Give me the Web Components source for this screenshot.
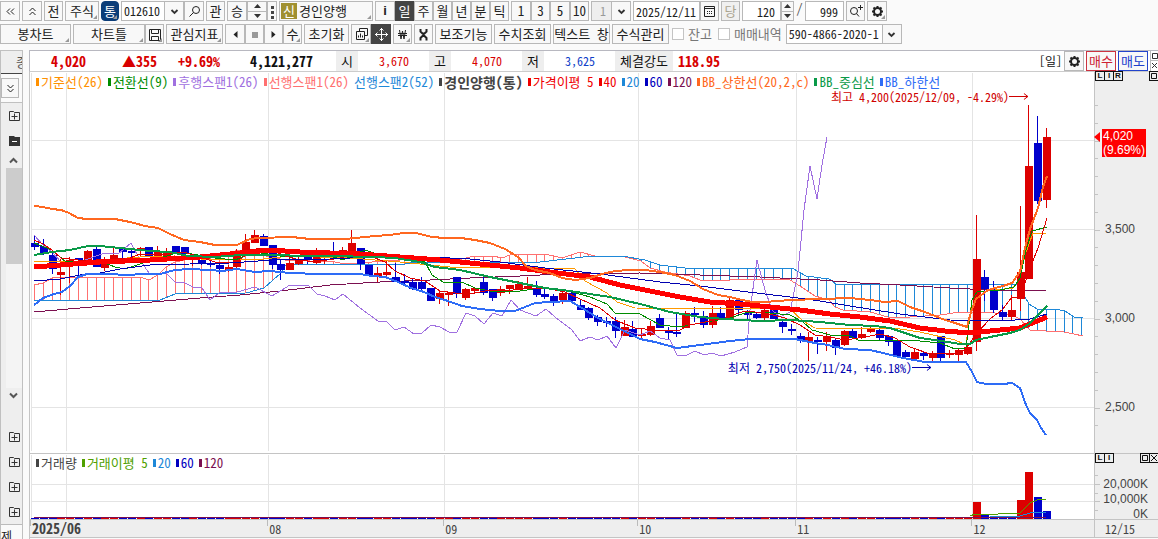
<!DOCTYPE html>
<html lang="ko">
<head>
<meta charset="utf-8">
<meta name="viewport" content="width=device-width, initial-scale=1">
<title>경인양행 012610</title>
<style>
  html, body { height: 100%; }
  body {
    margin: 0;
    background: #fafafa;
    color: #111;
    font: 13px/16px "Noto Sans CJK KR", "Liberation Sans", sans-serif;
    font-feature-settings: "hwid";
    overflow: hidden;
  }
</style>
</head>
<body>
<stock-app></stock-app>

<script>
// ---- icons ----
const ICONS = {
  left2: '<path d="M7 4.500 4 7.500 7 10.500M11 4.500 8 7.500 11 10.500"/>',
  up2: '<path d="M4.500 7 7.500 4 10.500 7M4.500 11 7.500 8 10.500 11"/>',
  down2: '<path d="M4.500 4 7.500 7 10.500 4M4.500 8 7.500 11 10.500 8"/>',
  chev: '<path d="M4.500 6 7.500 9 10.500 6" stroke-width="1.800"/>',
  up: '<path d="M4 9.500 7.500 6 11 9.500" stroke-width="2"/>',
  down: '<path d="M4 5.500 7.500 9 11 5.500" stroke-width="2"/>',
  search: '<circle cx="9" cy="6" r="3.500"/><path d="M6.500 8.500 2.500 12.500"/>',
  searchplus: '<circle cx="6" cy="7" r="3.500"/><path d="M8.500 9.500 11 12.500M12.500 1v5M10 3.500h5"/>',
  dots: '<path d="M6 2h3v3H6zM6 7h3v3H6zM6 12h3v3H6z" fill="#444" stroke="none"/>',
  save: '<path d="M2.500 2.500h11v11h-11zM4.500 2.500v4h7v-4M4.500 13.500v-4h7v4"/>',
  prev: '<path d="M9.500 4v7L5.500 7.500z" fill="#222" stroke="none"/>',
  stop: '<path d="M5 5h6v6H5z" fill="#999" stroke="none"/>',
  next: '<path d="M5.500 4v7L9.500 7.500z" fill="#222" stroke="none"/>',
  windows: '<path d="M5.500 4.500v-3h8v7h-3M2.500 4.500h8v8h-8zM4.500 10.500v-2M6.500 10.500v-4M8.500 10.500v-2"/>',
  move: '<path d="M7.500 1v13M1 7.500h13M5.500 3.500l2-2 2 2M5.500 11.500l2 2 2-2M3.500 5.500l-2 2 2 2M11.500 5.500l2 2-2 2"/>',
  won: '<path d="M4.500 3 6 12 7.500 4 9 12 10.500 3M3 6.500h9M3 8.500h9"/>',
  tool: '<path d="M4.500 2v2.500l2 2h2l2-2V2M4.500 13.500V11l2-2h2l2 2v2.500M7.500 6v4" stroke-width="2"/>',
  cal: '<path d="M2.500 2.500h10v10h-10zM2.500 4.500h10" /><path d="M5 7.500h6M5 9.500h6" stroke-dasharray="1 1"/>',
  gear: '<circle cx="7.500" cy="7.500" r="3.500" stroke-width="2"/><path d="M7.500 2v2M7.500 11v2M2 7.500h2M11 7.500h2M3.500 3.500l1.500 1.500M10 10l1.500 1.500M11.500 3.500l-1.500 1.500M5 10l-1.500 1.500" stroke-width="2"/>',
  plusbox: '<path d="M2.500 3.500h4l1 1h5v8h-10zM4.500 8.500h6M7.500 5.500v6"/>',
  minusbox: '<path d="M2 3h5l1 1h5v9H2z" fill="#333" stroke="none"/><path d="M5 8.500h5" stroke="#fff"/>',
};
const icon = (name, size = 15) =>
  `<svg width="${size}" height="${size}" viewBox="0 0 15 15" fill="none" stroke="currentColor" aria-hidden="true">${ICONS[name]}</svg>`;

// small helper, every element below only differs by its markup
function define(name, render) {
  customElements.define(name, class extends HTMLElement {
    constructor() {
      super();
      this.attachShadow({ mode: "open" });
    }
    connectedCallback() {
      this.shadowRoot.innerHTML = render(this);
    }
  });
}

// toolbar button. attributes: icon, corner, variant
define("tool-button", (el) => `
  <style>
    :host { display: block; flex: none; height: 20px; width: 20px; }
    button {
      box-sizing: border-box; position: relative;
      display: flex; align-items: center; justify-content: center;
      width: 100%; height: 100%; padding: 0; margin: 0;
      border: 1px solid #b8b8b8; background: #f8f8f8;
      font: inherit; font-feature-settings: inherit; color: #222; white-space: nowrap;
    }
    svg { flex: none; }
    :host([corner]) button::after {
      content: ""; position: absolute; right: 1px; bottom: 1px;
      border: 2px solid; border-color: transparent #999 #999 transparent;
    }
    :host([variant=dark]) button { background: #444; border-color: #444; color: #fff; }
    :host([variant=blue]) button { background: #0b3d78; border-color: #0b3d78; color: #fff; border-radius: 4px; }
    :host([variant=off]) button { background: #f0f0f0; color: #aaa490; }
    :host([variant=buy]) button { border-color: #cc3340; color: #cc2233; }
    :host([variant=sell]) button { border-color: #2244cc; color: #2040cc; }
    :host([variant=name]) button { justify-content: flex-start; padding-left: 1px; gap: 2px; }
  </style>
  <button type="button" aria-label="${el.getAttribute("label") || el.textContent.trim()}">${el.hasAttribute("icon") ? icon(el.getAttribute("icon")) : ""}<slot></slot></button>`);

define("tool-field", (el) => `
  <style>
    :host { display: block; flex: none; height: 20px; }
    input {
      box-sizing: border-box; width: 100%; height: 100%; padding: 0 2px; margin: 0;
      border: 1px solid #b8b8b8; background: #fff; color: #222;
      font: inherit; font-size: 12px; font-feature-settings: inherit;
      text-align: ${el.getAttribute("align") || "left"};
    }
    :host([align=right]) input { padding-right: 5px; }
  </style>
  <input type="text" aria-label="${el.getAttribute("label")}" value="${el.getAttribute("value")}">`);

define("tool-select", (el) => `
  <style>
    :host { display: grid; grid-template-columns: 1fr 20px; flex: none; height: 20px; }
    select {
      grid-area: 1 / 1 / 2 / 3; appearance: none; box-sizing: border-box;
      width: 100%; height: 20px; margin: 0; padding: 0 20px 0 2px; border: 1px solid #b8b8b8; border-radius: 0;
      background: #fff; color: #222; font: inherit; font-size: 12px; font-feature-settings: inherit;
    }
    :host([off]) select { background: #eee; color: #999; text-align: right; padding-right: 24px; }
    span {
      grid-area: 1 / 2; z-index: 1; pointer-events: none; margin: 1px 1px 1px 0;
      display: flex; align-items: center; justify-content: center;
      background: #f8f8f8; border-left: 1px solid #b8b8b8; color: #333;
    }
  </style>
  <select aria-label="${el.getAttribute("label")}"><option>${el.getAttribute("value")}</option></select>
  <span>${icon("chev")}</span>`);

define("tool-spin", (el) => `
  <style>
    :host { display: flex; flex-direction: column; flex: none; width: 13px; height: 20px; }
    button {
      box-sizing: border-box; flex: 1; min-height: 0; padding: 0; margin: 0;
      display: flex; align-items: center; justify-content: center;
      border: 1px solid #b8b8b8; background: #f8f8f8;
    }
    button + button { border-top: 0; }
    svg { display: block; }
  </style>
  <button type="button" aria-label="${el.getAttribute("label")} 증가"><svg width="7" height="4"><path d="M0 4 3.500 0 7 4z" fill="#333"/></svg></button>
  <button type="button" aria-label="${el.getAttribute("label")} 감소"><svg width="7" height="4"><path d="M0 0 3.500 4 7 0z" fill="#333"/></svg></button>`);

define("tool-check", () => `
  <style>
    :host { display: block; flex: none; }
    label { display: flex; align-items: center; gap: 4px; color: #777; }
    input { appearance: none; box-sizing: border-box; width: 12px; height: 12px; margin: 0; border: 1px solid #c4c4c4; background: #fff; }
    input:checked { background: #444; }
  </style>
  <label><input type="checkbox"><slot></slot></label>`);

define("tool-bar", () => `
  <style>
    :host { display: flex; align-items: center; height: 20px; gap: 2px; }
    ::slotted(div) { display: flex; flex: none; }
  </style>
  <slot></slot>`);

define("quote-bar", () => `
  <style>
    :host {
      display: flex; align-items: center; flex: none; box-sizing: border-box; height: 22px;
      background: #fff; border: 1px solid #b8b8c0; border-right: 0; border-bottom-color: #ccc;
      font-size: 12px; line-height: 20px;
    }
    span { flex: none; text-align: right; white-space: nowrap; }
    b { flex: none; text-align: right; font-size: 14px; }
    i { flex: none; font-style: normal; font-size: 13px; text-align: center; background: #eee; width: 22px; height: 20px; }
    .r { color: #d80000; } .b { color: #1040c8; }
    .end { margin-left: auto; padding-right: 2px; }
    .actions { display: flex; gap: 2px; font-size: 13px; line-height: 16px; }
    .mini { width: 8px; flex: none; }
  </style>
  <b class="r" style="width:56px">4,020</b>
  <b class="r" style="width:71px">▲355</b>
  <b class="r" style="width:63px">+9.69%</b>
  <b style="width:93px">4,121,277</b>
  <i style="margin-left:23px">시</i><span class="r" style="width:51px">3,670</span>
  <i style="margin-left:20px">고</i><span class="r" style="width:51px">4,070</span>
  <i style="margin-left:20px">저</i><span class="b" style="width:51px">3,625</span>
  <i style="margin-left:20px;width:58px">체결강도</i><b class="r" style="width:47px">118.95</b>
  <span class="end">[일]</span>
  <div class="actions">
    <tool-button icon="gear" label="설정"></tool-button>
    <tool-button variant="buy" style="width:30px">매수</tool-button>
    <tool-button variant="sell" style="width:30px">매도</tool-button>
    <svg class="mini" width="8" height="20" fill="none" stroke="#333"><path d="M0.500 0v20M0 9.500h8" stroke="#bbb"/><path d="M2.500 2.500h5v5h-5zM2 12l5 5M7 12l-5 5"/></svg>
  </div>`);

define("side-rail", () => `
  <style>
    :host {
      display: flex; flex-direction: column; flex: none; box-sizing: border-box; width: 23px;
      border: solid #c0c0c0; border-width: 1px 1px 0 1px; background: #eee;
    }
    .tab { height: 22px; line-height: 22px; border-bottom: 1px solid #444; overflow: hidden; padding-left: 15px; white-space: nowrap; color: #555; }
    .open { padding: 4px 0; background: #fafafa; border-bottom: 1px solid #c0c0c0; display: flex; }
    .open tool-button { width: 18px; }
    .row { height: 25px; display: flex; align-items: center; justify-content: flex-end; color: #333; }
    .scroll { flex: 1; display: flex; flex-direction: column; margin-left: 5px; color: #555; min-height: 0; }
    .scroll svg { flex: none; }
    .thumb { flex: 96; background: #ccc; }
    .rest { flex: 124; background: #f4f4f4; }
    .foot { height: 14px; border-top: 1px solid #bbb; background: #fafafa; overflow: hidden; line-height: 22px; font-size: 12px; color: #222; white-space: nowrap; }
    .gap { height: 21px; }
  </style>
  <div class="tab">종</div>
  <div class="open"><tool-button icon="down2" label="펼치기"></tool-button></div>
  <div class="row">${icon("plusbox")}</div>
  <div class="row">${icon("minusbox")}</div>
  <div class="scroll">${icon("up")}<div class="thumb"></div><div class="rest"></div>${icon("down")}</div>
  <div class="gap"></div>
  <div class="row">${icon("plusbox")}</div>
  <div class="row">${icon("plusbox")}</div>
  <div class="row">${icon("plusbox")}</div>
  <div class="row">${icon("plusbox")}</div>
  <div class="foot">제</div>`);

define("legend-item", () => `
  <style>
    :host { display: flex; align-items: center; gap: 2px; white-space: nowrap; }
    :host(:not([plain]))::before { content: ""; width: 3px; height: 8px; background: currentColor; }
    :host([strong]) { font-weight: bold; font-size: 14px; }
  </style>
  <slot></slot>`);

// window buttons in the corner of an axis column
define("pane-keys", (el) => {
  const key = (k) => {
    if (k === "□") return '<button type="button" aria-label="최대화"><svg width="8" height="8"><path d="M1.500 1.500h5v5h-5z" fill="none" stroke="#111"/></svg></button>';
    if (k === "×") return '<button type="button" aria-label="닫기"><svg width="8" height="8"><path d="M1 1l6 6M7 1 1 7" stroke="#111"/></svg></button>';
    return `<button type="button">${k}</button>`;
  };
  return `
  <style>
    :host { display: flex; justify-content: space-between; height: 10px; }
    div { display: flex; }
    button {
      box-sizing: border-box; width: 10px; height: 10px; margin: 0 -1px 0 0; padding: 0;
      display: flex; align-items: center; justify-content: center;
      border: 1px solid #111; background: #eee; color: #111; font: bold 8px/8px "Liberation Sans", sans-serif;
    }
    svg { display: block; flex: none; }
  </style>
  <div>${[...el.getAttribute("keys")].map(key).join("")}</div>
  <div>${[...el.getAttribute("end")].map(key).join("")}</div>`;
});

// ---- chart data ----
const X0 = 34.4, STEP = 8.8;
const px = (i) => X0 + STEP * i;

// side, high, body top, body bottom, low
const CANDLES = `b236,243,247,250 b239,246,254,255 b250,255,269,274 r259,272,275,295 r257,260,261,283 b258,258,260,275
r250,251,260,262 b247,249,267,267 r257,263,268,271 r248,255,260,260 b248,249,252,260 b250,251,252,258
r247,248,249,256 b247,247,257,257 r246,251,257,257 r248,252,258,258 b246,246,253,253 b247,247,254,254
r255,257,258,266 b258,260,263,265 b259,263,264,267 b263,265,269,274 r265,267,270,272 r249,253,267,268
r234,242,251,251 r230,235,243,243 b234,236,246,246 b245,245,265,269 b260,264,270,280 r258,263,270,270
r257,259,264,265 b255,256,260,264 r248,255,263,264 r250,255,257,264 b242,251,253,255 r247,250,253,256
r230,243,253,253 b248,248,264,270 b265,265,275,276 r267,273,277,282 r260,272,275,276 b263,277,282,282
b274,281,283,286 b279,282,289,290 b277,282,289,291 b288,288,301,301 r290,293,299,304 r292,293,294,306
b277,277,294,298 r288,289,298,300 r287,288,291,294 b277,282,293,295 b289,289,298,301 r286,289,293,296
r285,285,289,294 r281,284,290,290 r277,286,288,288 b281,288,295,297 b289,294,297,299 b294,296,301,306
r291,293,300,304 b292,293,301,302 b300,305,310,310 b307,308,318,320 b315,317,322,326 b317,321,322,327
b317,321,331,338 r320,327,336,336 b321,329,337,337 r328,334,336,339 r321,326,335,336 b314,318,328,328
b327,331,333,340 b314,332,333,337 r311,313,328,328 b307,313,314,322 b311,316,325,328 r306,313,325,328
b307,313,318,318 r297,300,318,318 b298,300,310,315 b310,313,315,320 b312,314,318,319 r308,310,318,320
b309,310,319,319 b320,322,327,333 b324,329,331,335 b333,336,341,343 r332,337,341,361 b337,340,342,354
r332,336,342,351 b338,340,348,355 r330,331,345,346 b328,331,338,338 r327,334,338,339 r326,329,332,333
b329,330,338,341 b335,336,342,346 b340,341,356,357 b350,352,357,359 r348,352,359,359 b352,353,356,360
r351,353,358,362 b336,336,358,361 r350,353,354,358 r349,350,355,361 r345,347,354,355 r215,259,342,351
b270,277,289,301 b281,289,310,313 b305,312,317,321 r295,310,317,321 r206,272,299,311 r105,166,279,279
b116,143,201,204 r128,137,200,208`.split(/\s+/).map((s) => [s[0], ...s.slice(1).split(",").map(Number)]);

const LINES = {
  lagging: ["#a070e0", 1, "34,235 43,245 52,252 61,262 80,262 96,256 105,253 118,254 131,243 140,260 149,273 166,273 175,282 185,283 193,287 202,288 210,300 219,293 237,292 255,287 272,296 290,285 308,285 317,294 325,296 335,300 343,294 360,308 378,321 387,322 395,330 404,327 414,334 422,333 431,325 440,327 449,332 457,332 466,313 475,316 484,324 493,313 502,316 511,300 520,310 536,316 546,309 555,317 572,330 580,341 590,337 598,340 607,336 616,348 625,330 640,335 650,331 660,338 670,340 677,355 685,356 695,351 704,355 712,353 721,356 735,352 747,347 750,310 757,260 765,290 772,310 780,317 790,312 798,272 804,210 810,166 817,199 822,165 827,137"],
  base: ["#ff9900", 1, "34,261 90,261 140,257 175,256 200,259 255,260 290,256 350,258 400,262 430,265 450,267 520,267 540,268 575,269 585,281 607,293 617,302 635,308 790,309 803,321 815,328 900,329 920,332 955,340 966,345 972,300 977,292 1013,288 1020,278 1025,255 1033,233 1046,233"],
  conv: ["#008c00", 1, "34,243 52,250 66,262 100,261 115,267 125,269 140,264 160,258 180,252 215,258 235,260 255,252 280,256 330,256 343,260 365,250 390,258 425,262 432,275 443,282 462,282 475,288 490,291 520,291 540,288 565,290 590,297 607,304 615,313 640,314 660,325 680,327 700,323 730,318 745,313 760,312 790,315 803,322 812,330 830,335 850,336 860,341 890,340 920,341 940,343 955,349 966,348 972,300 977,292 1000,290 1014,287 1020,278 1026,250 1032,231 1047,227"],
  ma5: ["#e00000", 1, "34,240 43,244 52,250 61,258 78,260 96,260 113,259 130,258 140,254 158,255 184,252 200,257 218,263 235,262 245,256 258,248 272,250 285,256 300,260 315,262 340,258 355,254 370,256 385,262 395,271 410,278 425,281 440,291 455,293 475,293 490,290 505,291 530,288 545,288 565,292 580,299 600,308 615,320 635,328 655,330 680,330 690,325 710,321 725,318 745,311 765,313 785,318 800,325 815,335 830,337 845,340 865,337 880,334 895,338 910,347 930,354 955,353 965,350 977,333 990,319 1003,309 1012,297 1020,298 1030,268 1038,248 1047,218"],
  ma60: ["#0000b0", 1, "34,281 60,279 80,275 100,273 120,269 150,265 190,264 230,263 272,260 330,259 370,257 430,257 470,259 500,262 545,268 600,274 660,282 700,286 740,291 790,297 820,301 850,306 900,314 950,320 1000,321 1030,319 1047,314"],
  ma120: ["#7b1050", 1, "34,312 80,308 140,303 200,298 240,295 280,291 330,285 380,282 430,280 470,278 520,276 560,274 640,273 700,275 760,277 820,280 860,283 900,285 950,288 970,289 1010,291 1047,290"],
  ma40: ["#ff0000", 5, "34,267 60,265 100,262 150,260 200,257 240,253 270,250 300,252 360,254 400,257 440,260 480,264 520,268 550,272 590,277 620,285 650,291 680,297 710,302 740,304 770,307 800,310 830,314 860,317 890,321 920,328 945,331 970,333 1000,330 1020,328 1035,322 1047,317"],
  bbMid: ["#0a9a48", 2, "34,255 52,252 70,250 88,246 100,246 120,248 150,251 170,252 188,256 215,257 240,255 280,255 300,256 330,256 375,257 395,258 420,262 435,267 460,270 490,277 520,283 545,288 570,291 610,297 640,304 670,312 700,317 725,319 760,321 790,320 820,322 850,325 875,326 890,328 905,333 920,338 935,340 960,344 970,344 976,340 990,337 1010,333 1020,330 1030,323 1038,315 1047,306"],
  bbUp: ["#ff6820", 2, "34,206 43,207 52,209 61,210 69,213 78,218 87,219 96,219 115,219 130,222 145,226 158,228 170,234 184,240 200,242 215,245 237,245 250,239 258,238 292,237 310,239 345,239 375,236 390,235 403,233 416,233 432,237 445,238 461,238 475,240 490,243 505,249 518,257 526,266 535,270 550,273 562,278 575,280 590,278 602,274 615,271 630,270 645,270 660,272 675,275 690,281 703,289 718,295 730,297 742,300 753,302 765,302 790,300 820,299 850,298 870,300 885,302 898,301 910,307 925,312 945,320 955,323 967,327 971,312 976,299 988,290 1003,286 1012,283 1020,272 1025,248 1030,229 1038,208 1043,187 1047,176"],
  bbLow: ["#2e6cf6", 2, "34,305 43,298 54,294 62,292 70,286 78,277 87,274 110,274 125,275 145,274 160,274 175,270 190,269 210,270 222,271 237,269 255,272 270,271 290,273 320,274 360,274 372,276 385,277 398,282 411,288 424,292 435,297 445,300 462,306 480,309 500,311 515,311 525,307 535,303 550,302 570,301 582,308 598,318 614,326 630,334 640,339 655,342 677,348 700,345 730,341 750,339 795,339 815,343 828,345 845,349 870,350 887,354 903,358 925,362 966,362 972,372 977,382 986,384 1003,384 1012,383 1020,388 1026,405 1030,413 1037,420 1041,428 1046,435"],
};
const SPAN_A = "34,285 43,283 52,278 61,277 96,277 140,277 149,280 158,275 166,267 175,262 190,259 220,254 240,250 262,255 275,258 285,260 335,262 345,264 400,260 430,258 440,260 450,258 458,260 470,257 493,256 502,258 510,255 545,254 562,258 580,252 595,256 625,257 641,261 650,268 665,272 690,276 700,280 730,280 765,279 790,280 800,286 815,296 829,300 835,307 843,310 870,312 888,317 910,317 940,315 960,312 985,312 1005,314 1012,315 1020,319 1030,330 1046,331 1064,332 1074,334 1083,336";
const SPAN_B = "34,300 160,300 175,294 246,293 264,288 273,280 281,273 285,266 290,264 405,264 415,262 540,262 592,256 622,256 645,260 660,265 685,268 792,268 806,276 829,279 836,284 850,284 1020,285 1024,295 1029,304 1037,309 1055,309 1065,311 1074,317 1083,318";
const MONTHS = [["2025/06", 31], ["", 66], ["08", 268], ["09", 444], ["10", 638], ["11", 796], ["12", 972]];

const COLOR = { r: "#dd0000", b: "#0000cc" };

// plot areas in drawing units
const PRICE = { x: 30, y: 72, w: 1064, h: 381 };
const VOLUME = { x: 30, y: 454, w: 1064, h: 65 };
const leftOf = (area, x) => `left:${((x - area.x) / area.w * 100).toFixed(2)}%`;
const topOf = (area, y) => `top:${((y - area.y) / area.h * 100).toFixed(2)}%`;

function valueAt(points, x) {
  const p = points.split(" ").map((s) => s.split(",").map(Number));
  for (let k = 1; k < p.length; k++) {
    if (x <= p[k][0]) {
      const t = (x - p[k - 1][0]) / (p[k][0] - p[k - 1][0]);
      return p[k - 1][1] + t * (p[k][1] - p[k - 1][1]);
    }
  }
  return p[p.length - 1][1];
}

const poly = (color, w, points) =>
  `<polyline points="${points}" stroke="${color}" stroke-width="${w}" fill="none"/>`;

const months = (top, bottom) =>
  MONTHS.map(([, x]) => `<path d="M${x} ${top}h1V${bottom}h-1z" fill="#e4e4e4"/>`).join("");

function cloud() {
  let out = "";
  for (let i = 0; i < 120; i++) {
    const x = Math.round(px(i) - 0.5);
    const a = Math.round(valueAt(SPAN_A, x)), b = Math.round(valueAt(SPAN_B, x));
    out += `<rect x="${x}" y="${Math.min(a, b)}" width="1" height="${Math.abs(a - b)}" fill="${a < b ? "#ff7070" : "#1e88d8"}"/>`;
  }
  return out + poly("#ff7070", 1, SPAN_A) + poly("#1e88d8", 1, SPAN_B);
}

function candles() {
  return CANDLES.map(([side, high, top, bottom, low], i) => {
    const x = Math.round(px(i) - 0.5);
    return `<path fill="${COLOR[side]}" d="M${x} ${high}h1V${low}h-1zM${x - 3} ${top}h8V${Math.max(bottom, top + 2)}h-8z"/>`;
  }).join("");
}

const arrow = '<svg width="20" height="7" fill="none" stroke="currentColor"><path d="M0 3.500h19M15 0.500l4 3-4 3"/></svg>';

const paneStyle = `
    :host { display: flex; min-height: 0; background: #fff; }
    .plot { position: relative; flex: 1; min-width: 0; }
    .plot > svg { position: absolute; inset: 0; width: 100%; height: 100%; display: block; }
    .legend { position: relative; display: flex; gap: 5px; padding: 2px 0 0 6px; height: 16px; }
    .axis {
      position: relative; flex: none; box-sizing: border-box; width: 64px;
      background: #eee; border-left: 1px solid #c4c4c4; color: #444;
      font: 12px/14px "Liberation Sans", sans-serif;
    }
    .axis > svg { position: absolute; left: 0; top: 0; height: 100%; width: 6px; }
    .axis > span { position: absolute; transform: translateY(-50%); white-space: nowrap; }
    pane-keys { position: relative; margin-top: -1px; }`;

define("price-chart", () => {
  const ticks = Array.from({ length: 19 }, (_, k) => Math.round(104.9 + 17.8 * k));
  return `
  <style>${paneStyle}
    .note { position: absolute; display: flex; align-items: center; font-size: 12px; white-space: nowrap; transform: translate(-100%, -50%); }
    .axis > span { left: 10px; }
    .axis > .last { left: 7px; width: 44px; box-sizing: border-box; padding-left: 1px; background: #f00; color: #fff; }
    .axis > .mark { left: -1px; width: 6px; height: 10px; transform: translateY(-50%); }
  </style>
  <div class="plot">
    <svg viewBox="30 72 1064 381" preserveAspectRatio="none" shape-rendering="crispEdges">
      ${months(73, 451)}
      ${[140, 229, 318, 407].map((y) => `<path d="M31 ${y}h1063v1H31z" fill="#e4e4e4"/>`).join("")}
      ${cloud()}
      ${poly(...LINES.ma120)}
      ${candles()}
      ${["lagging", "base", "conv", "ma5", "ma60", "ma40", "bbMid", "bbUp", "bbLow"].map((k) => poly(...LINES[k])).join("")}
    </svg>
    <div class="legend"><slot></slot></div>
    <div class="note" style="${leftOf(PRICE, 1029)};${topOf(PRICE, 97)};color:#d00000">최고 4,200(2025/12/09, -4.29%)${arrow}</div>
    <div class="note" style="${leftOf(PRICE, 932)};${topOf(PRICE, 368)};color:#0000b0">최저 2,750(2025/11/24, +46.18%)${arrow}</div>
  </div>
  <div class="axis">
    <svg viewBox="0 72 6 381" preserveAspectRatio="none" shape-rendering="crispEdges">${ticks.map((y, k) => `<rect x="0" y="${y}" width="${k % 5 === 2 ? 5 : 3}" height="1" fill="#c4c4c4"/>`).join("")}</svg>
    <pane-keys keys="LIR" end="□"></pane-keys>
    <svg class="mark" viewBox="0 0 6 10" style="${topOf(PRICE, 137)}"><path d="M6 0v10L0 5z" fill="#f00"/></svg>
    <span class="last" style="${topOf(PRICE, 143)}">4,020<br>(9.69%)</span>
    <span style="${topOf(PRICE, 229)}">3,500</span>
    <span style="${topOf(PRICE, 318)}">3,000</span>
    <span style="${topOf(PRICE, 407)}">2,500</span>
  </div>`;
});

define("volume-chart", () => {
  const tops = { 107: 502, 108: 515, 109: 517, 110: 517, 111: 517, 112: 500, 113: 472, 114: 497, 115: 511 };
  const side = (i) => (i === 115 || i === 111 ? "b" : CANDLES[i][0]);
  const bars = CANDLES.map((_, i) =>
    `<path fill="${COLOR[side(i)]}" d="M${Math.round(px(i) - 3.5)} ${tops[i] || 518}h8V519h-8z"/>`).join("");
  return `
  <style>${paneStyle}
    .legend { padding-top: 1px; }
    .axis > span { right: 10px; }
  </style>
  <div class="plot">
    <svg viewBox="30 454 1064 65" preserveAspectRatio="none" shape-rendering="crispEdges">
      ${months(455, 519)}
      <path d="M31 484h1063v1H31zM31 501h1063v1H31z" fill="#e4e4e4"/>
      ${bars}
      <path d="M34 517h1012v1H34z" fill="#7b1050"/>
      ${poly("#50a000", 1, "970,516 975,514 998,514 1020,513 1030,503 1037,500 1046,499")}
      ${poly("#1e88d8", 1, "990,517 1020,516 1030,513 1046,512")}
    </svg>
    <div class="legend"><slot></slot></div>
  </div>
  <div class="axis">
    <svg viewBox="0 454 6 65" preserveAspectRatio="none" shape-rendering="crispEdges"><path d="M0 475h3v1H0zM0 484h5v1H0zM0 493h3v1H0zM0 501h5v1H0zM0 510h3v1H0z" fill="#c4c4c4"/></svg>
    <pane-keys keys="LI" end="□×"></pane-keys>
    <span style="${topOf(VOLUME, 484)}">20,000K</span>
    <span style="${topOf(VOLUME, 499)}">10,000K</span>
    <span style="${topOf(VOLUME, 514)}">0K</span>
  </div>`;
});

define("time-axis", () => `
  <style>
    :host {
      display: flex; flex: none; height: 17px; line-height: 17px; font-size: 12px; color: #444;
      background: #eee; border-top: 1px solid #c4c4c4; border-bottom: 1px solid #c4c4c4;
    }
    .scale { flex: 1; display: flex; }
    .scale span { box-sizing: border-box; min-width: 0; padding-left: 2px; white-space: nowrap; background: linear-gradient(#bbb, #bbb) 0 0 / 1px 6px no-repeat; }
    .scale span:first-child { font-weight: bold; font-size: 14px; }
    .end { box-sizing: border-box; width: 64px; padding-left: 10px; border-left: 1px solid #c4c4c4; }
  </style>
  <div class="scale">
    <span style="flex:238 0 0">2025/06</span>
    <span style="flex:176 0 0">08</span>
    <span style="flex:194 0 0">09</span>
    <span style="flex:158 0 0">10</span>
    <span style="flex:176 0 0">11</span>
    <span style="flex:122 0 0">12</span>
  </div>
  <div class="end">12/15</div>`);

define("stock-app", () => `
  <style>
    :host { display: flex; flex-direction: column; height: 100vh; min-height: 360px; }
    header { display: flex; flex-direction: column; gap: 3px; padding: 1px 0 6px; flex: none; }
    .body { flex: 1; display: flex; gap: 6px; min-height: 0; }
    main { flex: 1; min-width: 0; display: flex; flex-direction: column; box-sizing: border-box; border-left: 1px solid #c4c4c4; padding-bottom: 1px; }
    main quote-bar { margin-left: -1px; }
    price-chart { flex: 381 1 0; }
    volume-chart { flex: 65 1 0; border-top: 1px solid #c4c4c4; }
    .tag { display: flex; align-items: center; justify-content: center; width: 16px; height: 16px; background: #a09030; color: #fff; }
    .slash { width: 11px; text-align: center; color: #555; }
    .w19 { width: 19px; }
    .info { font: bold 13px/16px "Liberation Sans", sans-serif; }
    .checks { gap: 6px; padding: 0 2px 0 1px; }
  </style>
  <header>
    <tool-bar>
      <tool-button icon="left2" label="이전"></tool-button>
      <tool-button icon="up2" label="접기"></tool-button>
      <tool-button class="w19">전</tool-button>
      <tool-button corner style="width:34px">주식</tool-button>
      <tool-button corner variant="blue" style="width:18px">통</tool-button>
      <div>
        <tool-select label="종목코드" value="012610" style="width:63px"></tool-select>
        <tool-button icon="search" label="종목검색"></tool-button>
      </div>
      <tool-button class="w19">관</tool-button>
      <div>
        <tool-button>승</tool-button>
        <tool-spin label="종목" style="width:20px"></tool-spin>
        <tool-button icon="dots" label="더보기" style="width:10px"></tool-button>
      </div>
      <tool-button corner variant="name" style="width:94px"><span class="tag">신</span>경인양행</tool-button>
      <div>
        <tool-button><span class="info">i</span></tool-button>
        <tool-button class="w19" variant="dark">일</tool-button>
        <tool-button class="w19">주</tool-button>
        <tool-button class="w19">월</tool-button>
        <tool-button class="w19">년</tool-button>
        <tool-button class="w19">분</tool-button>
        <tool-button class="w19">틱</tool-button>
      </div>
      <div>
        <tool-button>1</tool-button>
        <tool-button class="w19">3</tool-button>
        <tool-button>5</tool-button>
        <tool-button class="w19">10</tool-button>
      </div>
      <tool-select off label="주기" value="1" style="width:40px"></tool-select>
      <div>
        <tool-field label="일자" value="2025/12/11" style="width:67px"></tool-field>
        <tool-button icon="cal" class="w19" label="달력"></tool-button>
      </div>
      <tool-button variant="off" class="w19">당</tool-button>
      <div>
        <tool-field align="right" label="표시 봉수" value="120" style="width:39px"></tool-field>
        <tool-spin label="봉수"></tool-spin>
        <span class="slash">/</span>
        <tool-field align="right" label="전체 봉수" value="999" style="width:39px"></tool-field>
      </div>
      <tool-button icon="searchplus" class="w19" label="확대"></tool-button>
      <tool-button icon="gear" corner label="환경설정"></tool-button>
    </tool-bar>
    <tool-bar>
      <tool-button corner style="width:71px">봉차트</tool-button>
      <div>
        <tool-button corner style="width:72px">차트틀</tool-button>
        <tool-button corner icon="save" class="w19" label="저장"></tool-button>
      </div>
      <tool-button corner style="width:57px">관심지표</tool-button>
      <div>
        <tool-button icon="prev" label="뒤로"></tool-button>
        <tool-button icon="stop" class="w19" label="정지"></tool-button>
        <tool-button icon="next" class="w19" label="앞으로"></tool-button>
        <tool-button corner class="w19">수</tool-button>
      </div>
      <tool-button style="width:45px">초기화</tool-button>
      <div>
        <tool-button corner icon="windows" label="창 배열"></tool-button>
        <tool-button variant="dark" icon="move" label="이동"></tool-button>
      </div>
      <tool-button corner icon="won" class="w19" label="원화"></tool-button>
      <tool-button icon="tool" class="w19" label="도구"></tool-button>
      <tool-button style="width:57px">보조기능</tool-button>
      <tool-button style="width:57px">수치조회</tool-button>
      <tool-button style="width:57px">텍스트 창</tool-button>
      <tool-button style="width:57px">수식관리</tool-button>
      <div class="checks">
        <tool-check>잔고</tool-check>
        <tool-check>매매내역</tool-check>
      </div>
      <tool-select label="계좌" value="590-4866-2020-1" style="width:116px"></tool-select>
    </tool-bar>
  </header>
  <div class="body">
    <side-rail></side-rail>
    <main>
      <quote-bar></quote-bar>
      <price-chart>
        <legend-item style="color:#ff9000">기준선(26)</legend-item>
        <legend-item style="color:#008c00">전환선(9)</legend-item>
        <legend-item style="color:#a070e0">후행스팬1(26)</legend-item>
        <legend-item style="color:#ff7070">선행스팬1(26)</legend-item>
        <legend-item plain style="color:#1e88d8">선행스팬2(52)</legend-item>
        <legend-item strong style="color:#444">경인양행(통)</legend-item>
        <legend-item style="color:#f00000">가격이평 5</legend-item>
        <legend-item style="color:#f00000">40</legend-item>
        <legend-item style="color:#1e88d8">20</legend-item>
        <legend-item style="color:#0000c0">60</legend-item>
        <legend-item style="color:#7b1050">120</legend-item>
        <legend-item style="color:#ff6820">BB_상한선(20,2,c)</legend-item>
        <legend-item style="color:#0a9a48">BB_중심선</legend-item>
        <legend-item style="color:#2e6cf6">BB_하한선</legend-item>
      </price-chart>
      <volume-chart>
        <legend-item style="color:#444">거래량</legend-item>
        <legend-item style="color:#50a000">거래이평 5</legend-item>
        <legend-item style="color:#1e88d8">20</legend-item>
        <legend-item style="color:#0000c0">60</legend-item>
        <legend-item style="color:#7b1050">120</legend-item>
      </volume-chart>
      <time-axis></time-axis>
    </main>
  </div>`);
</script>
</body>
</html>
